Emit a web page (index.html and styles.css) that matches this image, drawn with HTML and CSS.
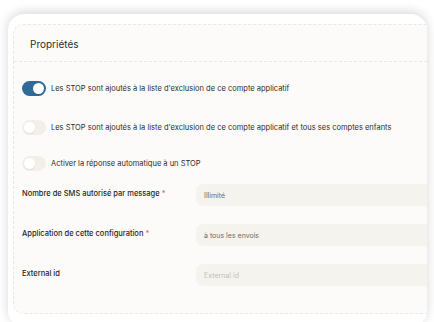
FILE: index.html
```html
<!DOCTYPE html>
<html>
<head>
    <meta charset="UTF-8">
    <title>Propriétés</title>
    <link rel="stylesheet" href="styles.css">
</head>
<body>
    <div class="frame">
        <div class="card">
            <div class="panel">
                <div class="panel-header">Propriétés</div>

                <div class="panel-body">
                    <!-- Toggles -->
                    <div class="toggle-row first">
                        <span class="switch on"><span class="knob"></span></span>
                        <span class="toggle-label">Les STOP sont ajoutés à la liste d'exclusion de ce compte applicatif</span>
                    </div>
                    <div class="toggle-row second">
                        <span class="switch"><span class="knob"></span></span>
                        <span class="toggle-label">Les STOP sont ajoutés à la liste d'exclusion de ce compte applicatif et tous ses comptes enfants</span>
                    </div>
                    <div class="toggle-row third">
                        <span class="switch"><span class="knob"></span></span>
                        <span class="toggle-label">Activer la réponse automatique à un STOP</span>
                    </div>

                    <!-- Fields -->
                    <div class="field first-field">
                        <label>Nombre de SMS autorisé par message <span class="req">*</span></label>
                        <input type="text" value="Illimité" />
                    </div>
                    <div class="field">
                        <label>Application de cette configuration <span class="req">*</span></label>
                        <input type="text" value="à tous les envois" />
                    </div>
                    <div class="field">
                        <label>External id</label>
                        <input type="text" placeholder="External id" />
                    </div>
                </div>
            </div>
        </div>
    </div>
</body>
</html>
```

FILE: styles.css
```css
body {
    margin: 0;
    background: #ffffff;
    font-family: Inter, "Noto Sans", sans-serif;
    overflow: hidden;
}
.frame {
    padding: 14px 7px 0 8px;
    height: 322px;
    box-sizing: border-box;
}
.card {
    height: 303px;
    background: #ffffff;
    border-radius: 16px;
    box-shadow: 0 -2px 11px rgba(0,0,0,0.16);
    padding: 10px 0 0 5px;
    overflow: hidden;
}
.panel {
    width: 440px;
    height: 290px;
    box-sizing: border-box;
    background: #fcfbf9;
    border: 1px dashed #ebe8e2;
    border-radius: 10px;
}
.panel-header {
    height: 37px;
    box-sizing: border-box;
    padding: 13px 0 0 16px;
    font-size: 10px;
    color: #2d2d2d;
    border-bottom: 1px dashed #ebe8e2;
}
.panel-body {
    padding: 19px 0 0 8px;
}
.toggle-row {
    display: flex;
    align-items: center;
    gap: 5px;
    height: 15px;
}
.toggle-row.second { margin-top: 24px; }
.toggle-row.third { margin-top: 21px; }
.switch {
    position: relative;
    width: 24px;
    height: 15px;
    border-radius: 8px;
    background: #f3efe8;
    flex-shrink: 0;
}
.switch.on { background: #2f6b96; }
.knob {
    position: absolute;
    top: 2px;
    left: 2px;
    width: 11px;
    height: 11px;
    border-radius: 50%;
    background: #ffffff;
    box-shadow: 0 1px 1px rgba(0,0,0,0.08);
}
.switch.on .knob { left: 11px; }
.toggle-label {
    font-size: 7.5px;
    color: #2b2b2b;
}
.field {
    display: grid;
    grid-template-columns: 174px 1fr;
    align-items: start;
    margin-top: 18px;
}
.field.first-field { margin-top: 13px; }
label {
    padding-top: 5px;
    font-size: 7.5px;
    font-weight: 500;
    color: #262626;
}
.req { color: #e8664d; }
input {
    height: 22px;
    border: none;
    border-radius: 7px;
    background: #f4f3ee;
    padding: 0 8px;
    font-family: Inter, "Noto Sans", sans-serif;
    font-size: 7px;
    color: #6b6b6b;
    box-sizing: border-box;
    outline: none;
}
input::placeholder { color: #c2bfb8; }
```
